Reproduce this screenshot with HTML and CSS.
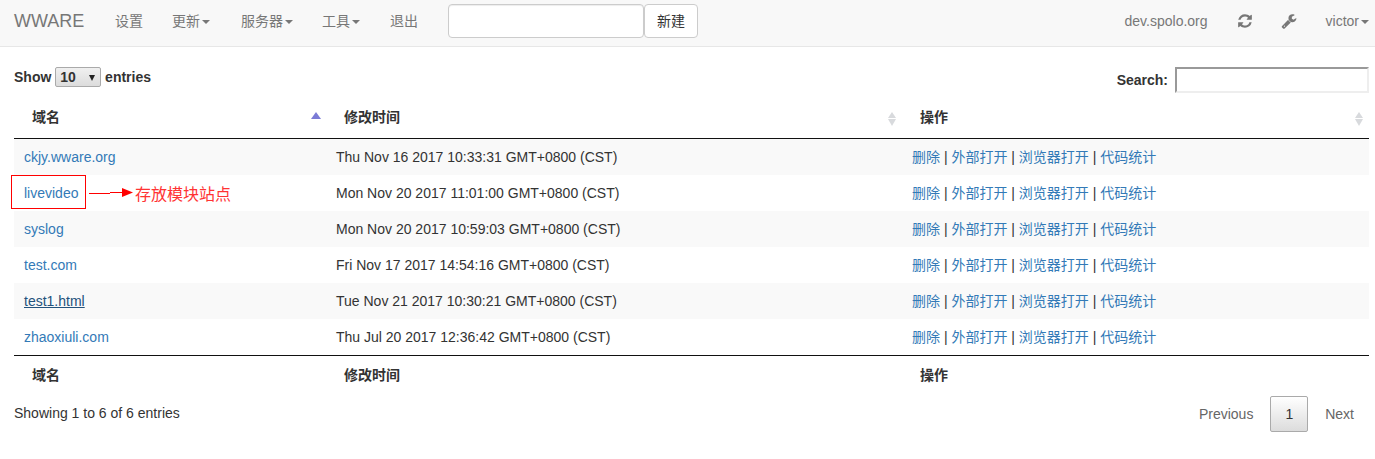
FILE: index.html
```html
<!DOCTYPE html>
<html lang="zh">
<head>
<meta charset="utf-8">
<title>WWARE</title>
<link rel="stylesheet" href="styles.css">
</head>
<body>
<nav class="navbar">
  <a class="brand">WWARE</a>
  <a class="nav-link tight">设置</a>
  <a class="nav-link wide">更新<i class="caret"></i></a>
  <a class="nav-link tight">服务器<i class="caret"></i></a>
  <a class="nav-link">工具<i class="caret"></i></a>
  <a class="nav-link">退出</a>
  <form class="nav-form"><input class="nav-input" type="text"><button class="nav-btn" type="button">新建</button></form>
  <div class="nav-right">
    <a class="nav-link host">dev.spolo.org</a>
    <a class="nav-icon"><svg viewBox="0 0 1792 1792" width="16" height="16"><path fill="#777" d="M1639 1056q0 5-1 7-64 268-268 434.500t-478 166.500q-146 0-282.500-55t-243.500-157l-129 129q-19 19-45 19t-45-19-19-45v-448q0-26 19-45t45-19h448q26 0 45 19t19 45-19 45l-137 137q71 66 161 102t187 36q134 0 250-65t186-179q11-17 53-117 8-23 30-23h192q13 0 22.500 9.500t9.500 22.500zm25-800v448q0 26-19 45t-45 19h-448q-26 0-45-19t-19-45 19-45l138-138q-148-137-349-137-134 0-250 65t-186 179q-11 17-53 117-8 23-30 23h-199q-13 0-22.500-9.500t-9.500-22.500v-7q65-268 270-434.500t480-166.500q146 0 284 55.500t245 156.500l130-129q19-19 45-19t45 19 19 45z"/></svg></a>
    <a class="nav-icon"><svg viewBox="0 0 1792 1792" width="16" height="16"><path fill="#777" d="M448 1472q0-26-19-45t-45-19-45 19-19 45 19 45 45 19 45-19 19-45zm644-420l-682 682q-37 37-90 37-52 0-91-37l-106-108q-38-36-38-90 0-53 38-91l681-681q39 98 114.500 173.500t173.500 114.500zm634-435q0 39-23 106-47 134-164.500 217.500t-258.500 83.500q-185 0-316.500-131.500t-131.500-316.500 131.500-316.500 316.500-131.500q58 0 121.500 16.500t107.500 46.500q16 11 16 28t-16 28l-293 169v224l193 107q5-3 79-48.500t135.500-81 70.500-35.500q15 0 23.500 10t8.500 25z"/></svg></a>
    <a class="nav-link user">victor<i class="caret"></i></a>
  </div>
</nav>
<main class="content">
  <div class="controls">
    <label class="length">Show <span class="select-wrap"><select class="length-select"><option>10</option></select></span> entries</label>
    <label class="search">Search: <input class="search-input" type="text"></label>
  </div>
  <table class="table">
    <thead>
      <tr>
        <th class="col-name sorted">域名<i class="sort"><b class="up active"></b></i></th>
        <th class="col-time">修改时间<i class="sort"><b class="up"></b><b class="down"></b></i></th>
        <th class="col-act">操作<i class="sort"><b class="up"></b><b class="down"></b></i></th>
      </tr>
    </thead>
    <tbody>
      <tr class="odd"><td><a>ckjy.wware.org</a></td><td>Thu Nov 16 2017 10:33:31 GMT+0800 (CST)</td><td><a>删除</a> | <a>外部打开</a> | <a>浏览器打开</a> | <a>代码统计</a></td></tr>
      <tr><td class="annot-cell"><a>livevideo</a>
        <span class="annot-box"></span>
        <svg class="annot-arrow" width="46" height="10" viewBox="0 0 46 10"><path d="M0 5.500H21M21 4.500H34" stroke="#f00" fill="none"/><path d="M33 0L44 4.500L33 9Z" fill="#f00"/></svg>
        <span class="annot-text">存放模块站点</span></td><td>Mon Nov 20 2017 11:01:00 GMT+0800 (CST)</td><td><a>删除</a> | <a>外部打开</a> | <a>浏览器打开</a> | <a>代码统计</a></td></tr>
      <tr class="odd"><td><a>syslog</a></td><td>Mon Nov 20 2017 10:59:03 GMT+0800 (CST)</td><td><a>删除</a> | <a>外部打开</a> | <a>浏览器打开</a> | <a>代码统计</a></td></tr>
      <tr><td><a>test.com</a></td><td>Fri Nov 17 2017 14:54:16 GMT+0800 (CST)</td><td><a>删除</a> | <a>外部打开</a> | <a>浏览器打开</a> | <a>代码统计</a></td></tr>
      <tr class="odd"><td><a class="hover">test1.html</a></td><td>Tue Nov 21 2017 10:30:21 GMT+0800 (CST)</td><td><a>删除</a> | <a>外部打开</a> | <a>浏览器打开</a> | <a>代码统计</a></td></tr>
      <tr><td><a>zhaoxiuli.com</a></td><td>Thu Jul 20 2017 12:36:42 GMT+0800 (CST)</td><td><a>删除</a> | <a>外部打开</a> | <a>浏览器打开</a> | <a>代码统计</a></td></tr>
    </tbody>
    <tfoot>
      <tr><th>域名</th><th>修改时间</th><th>操作</th></tr>
    </tfoot>
  </table>
  <div class="bottom">
    <div class="info">Showing 1 to 6 of 6 entries</div>
    <div class="pager"><a class="page prev">Previous</a><a class="page current">1</a><a class="page next">Next</a></div>
  </div>
</main>
</body>
</html>
```
FILE: styles.css
```css
* { box-sizing: border-box; }
html, body { margin: 0; padding: 0; }
body { font-family: "Liberation Sans", "Noto Sans CJK SC", sans-serif; font-size: 14px; line-height: 20px; color: #333; background: #fff; }
a { color: #337ab7; }

.navbar { height: 47px; background: #f8f8f8; border-bottom: 1px solid #e7e7e7; display: flex; align-items: center; padding: 0 0 4px 14px; }
.brand { font-size: 18px; color: #777; width: 101px; }
.nav-link { color: #777; }
.navbar > .nav-link { margin-right: 30px; }
.navbar > .tight { margin-right: 29px; }
.navbar > .wide { margin-right: 31px; }
.caret { display: inline-block; width: 0; height: 0; margin-left: 2px; vertical-align: middle; border-top: 4px solid #777; border-left: 4px solid transparent; border-right: 4px solid transparent; }
.nav-form { display: flex; }
.nav-input { width: 196px; height: 34px; border: 1px solid #ccc; border-radius: 4px; background: #fff; box-shadow: inset 0 1px 1px rgba(0,0,0,.075); }
.nav-btn { width: 54px; height: 34px; border: 1px solid #ccc; border-radius: 4px; background: #fff; color: #333; font: 14px "Liberation Sans", "Noto Sans CJK SC", sans-serif; padding: 0 0 2px; }
.nav-right { margin-left: auto; display: flex; align-items: center; }
.host { margin-right: 29px; }
.nav-icon { display: flex; margin-right: 28px; }
.user { margin-left: 1px; margin-right: 6px; }

.content { padding: 0 6px 0 14px; }
.controls { display: flex; justify-content: space-between; height: 48px; }
.length { font-weight: bold; margin-top: 20px; }
.select-wrap { display: inline-block; position: relative; height: 20px; }
.select-wrap::after { content: ""; position: absolute; left: 34px; top: 8px; border-top: 6px solid #222; border-left: 3px solid transparent; border-right: 3px solid transparent; pointer-events: none; }
.length-select { display: block; width: 46px; height: 20px; font: bold 14px "Liberation Sans", sans-serif; color: #333; background: linear-gradient(#f0f0f0, #dcdcdc); border: 1px solid #aaa; border-radius: 2px; padding: 0 0 0 4px; appearance: none; -webkit-appearance: none; }
.search { font-weight: bold; margin-top: 20px; display: flex; gap: 7px; align-items: center; height: 26px; }
.search-input { width: 194px; height: 26px; border-style: solid; border-width: 2px; border-color: #999 #eee #eee #999; background: #fff; }

.table { width: 100%; border-collapse: collapse; table-layout: fixed; }
.col-name { width: 312px; }
.col-time { width: 576px; }
th { text-align: left; font-weight: bold; padding: 10px 18px 9px; position: relative; height: 43px; }
thead th { border-bottom: 1px solid #111; }
tfoot th { border-top: 1px solid #111; height: 40px; padding: 9px 18px 10px; }
td { height: 36px; padding: 8px 10px; }
tr.odd td { background: #f9f9f9; }
.hover { color: #23527c; text-decoration: underline; }

.sort { position: absolute; right: 6px; top: 17px; width: 8px; height: 14px; display: block; }
.sort b { position: absolute; left: 0; width: 0; height: 0; border-left: 4px solid transparent; border-right: 4px solid transparent; }
.up { top: 0; border-bottom: 6px solid #d8dadd; }
.down { bottom: 0; border-top: 7px solid #d8dadd; }
.sorted .sort { right: 5px; width: 10px; }
.sort .active { border-left-width: 5px; border-right-width: 5px; border-bottom: 7px solid #7b7bd6; }

.annot-cell { position: relative; }
.annot-box { position: absolute; left: -3px; top: 0; width: 75px; height: 34px; border: 1px solid #f00; }
.annot-arrow { position: absolute; left: 75px; top: 13px; }
.annot-text { position: absolute; left: 121px; top: 8px; color: #f33; font-family: "Noto Sans CJK SC", sans-serif; font-size: 16px; white-space: nowrap; }

.bottom { display: flex; justify-content: space-between; }
.info { margin-top: 8px; }
.pager { display: flex; height: 36px; margin-top: 1px; }
.page { color: #666; padding: 8px 16px; }
.prev { padding-right: 17px; }
.next { padding-left: 17px; padding-right: 15px; }
.page.current { color: #333; border: 1px solid #aaa; border-radius: 2px; background: linear-gradient(#fff, #dcdcdc); padding: 7px 14px; }
```
